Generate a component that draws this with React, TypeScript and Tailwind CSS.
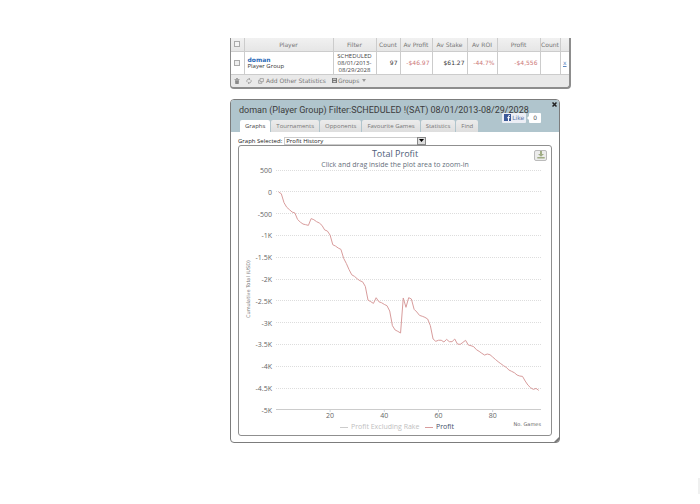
import { useState } from "react";

const columns = [
    { label: "Player", width: "w-[89px]" },
    { label: "Filter", width: "w-[43px]" },
    { label: "Count", width: "w-[24px]" },
    { label: "Av Profit", width: "w-[32px]" },
    { label: "Av Stake", width: "w-[35px]" },
    { label: "Av ROI", width: "w-[30px]" },
    { label: "Profit", width: "w-[43px]" },
    { label: "Count", width: "w-[20px]" },
];

const tabs = ["Graphs", "Tournaments", "Opponents", "Favourite Games", "Statistics", "Find"];

// running total in USD, one entry per game
const profit = [
    0, -40, -245, -350, -405, -460, -480, -630, -690, -735,
    -750, -765, -610, -635, -680, -710, -765, -870, -895, -987,
    -1210, -1240, -1285, -1316, -1520, -1640, -1780, -1900, -1935, -1990,
    -2035, -2060, -2165, -2480, -2515, -2555, -2425, -2517, -2540, -2578,
    -2608, -2730, -3066, -3165, -3196, -3234, -2431, -2645, -2424, -2454,
    -2690, -2752, -2830, -2850, -2875, -2913, -3066, -3372, -3425, -3400,
    -3400, -3440, -3380, -3433, -3433, -3372, -3487, -3495, -3450, -3402,
    -3510, -3525, -3548, -3617, -3655, -3700, -3740, -3716, -3732, -3785,
    -3840, -3892, -3938, -3984, -4022, -4083, -4114, -4145, -4198, -4221,
    -4229, -4336, -4428, -4490, -4527, -4505, -4551,
];

const yTicks = ["500", "0", "-500", "-1K", "-1.5K", "-2K", "-2.5K", "-3K", "-3.5K", "-4K", "-4.5K", "-5K"];

const gameX = (game: number) => 39.6 + (game - 1) * 2.71;
const valueY = (value: number) => 46 - (value / 500) * 21.8;

const TrashIcon = () => (
    <svg className="h-[6px] w-[6px]" viewBox="0 0 6 6" fill="#8a8a8a">
        <path d="M.5 1h1.500V.3h2V1h1.500v.8h-5zM1 2.200h4L4.700 6H1.300z" />
    </svg>
);

const RefreshIcon = () => (
    <svg className="h-[6px] w-[6px]" viewBox="0 0 6 6" fill="none" stroke="#999" strokeWidth=".8">
        <path d="M1.200 4.200A2 2 0 0 1 3 1h.8M2.900 0l1 1-1 1M4.800 1.800A2 2 0 0 1 3 5h-.8M3.100 4l-1 1 1 1" />
    </svg>
);

const CopyIcon = () => (
    <svg className="h-[6px] w-[6px]" viewBox="0 0 6 6" fill="none" stroke="#999" strokeWidth=".8">
        <path d="M2 .6h3.400v3H2zM3.800 3.600v1.700H.6V2.300H2" />
    </svg>
);

const SaveIcon = () => (
    <svg className="h-[5px] w-[5px]" viewBox="0 0 5 5">
        <path d="M0 0h5v5H0z" fill="#777" />
        <path d="M1 .7h3v1.100H1zM1.200 3h2.600v1.300H1.200z" fill="#ddd" />
    </svg>
);

const StatsTable = () => (
    <section className="w-full max-w-[341px] overflow-hidden rounded-b-[4px] border-r-2 border-b-2 border-l border-[#8d8d8d] bg-[#e9e9e9]">
        <table className="w-full table-fixed border-collapse text-[6px] leading-[7px] text-[#444]">
            <thead>
                <tr className="h-[13px] bg-gradient-to-b from-[#f1f1f1] to-[#e6e6e6]">
                    <th className="w-[13px] border-r border-b border-[#ccc] p-0">
                        <input type="checkbox" aria-label="Select all" className="mx-auto block h-[6px] w-[6px] appearance-none border border-[#aaa] bg-[#f4f4f4]" />
                    </th>
                    {columns.map((col, i) => (
                        <th key={i} className={`${col.width} border-r border-b border-[#ccc] p-0 font-normal whitespace-nowrap text-[#777]`}>
                            {col.label}
                        </th>
                    ))}
                    <th className="border-b border-[#ccc] p-0"></th>
                </tr>
            </thead>
            <tbody>
                <tr className="h-[23px] bg-white">
                    <td className="border-r border-b border-[#ccc] p-0">
                        <input type="checkbox" aria-label="Select doman" className="mx-auto block h-[6px] w-[6px] appearance-none border border-[#aaa] bg-[#eee]" />
                    </td>
                    <td className="border-r border-b border-[#ccc] py-0 pr-0 pl-[3px]">
                        <a href="#doman" className="block font-bold text-[#2a6ab8]">doman</a>
                        <span className="block font-['Open_Sans',sans-serif] text-[#333]">Player Group</span>
                    </td>
                    <td className="border-r border-b border-[#ccc] px-0 pt-px pb-0 text-center font-['Open_Sans',sans-serif]">
                        SCHEDULED<br />08/01/2013-<br />08/29/2028
                    </td>
                    <td className="border-r border-b border-[#ccc] py-0 pr-[2px] pl-0 text-right text-[#333]">97</td>
                    <td className="border-r border-b border-[#ccc] py-0 pr-[2px] pl-0 text-right text-[#cc7777]">-$46.97</td>
                    <td className="border-r border-b border-[#ccc] py-0 pr-[2px] pl-0 text-right text-[#333]">$61.27</td>
                    <td className="border-r border-b border-[#ccc] py-0 pr-[2px] pl-0 text-right text-[#cc7777]">-44.7%</td>
                    <td className="border-r border-b border-[#ccc] py-0 pr-[2px] pl-0 text-right text-[#cc7777]">-$4,556</td>
                    <td className="border-r border-b border-[#ccc] p-0"></td>
                    <td className="border-b border-[#ccc] p-0 text-center">
                        <a href="#remove" className="text-[#5b86bf] underline">x</a>
                    </td>
                </tr>
            </tbody>
        </table>
        <div className="flex h-[12px] items-center pl-[3px] text-[6px] leading-[8px] text-[#777]">
            <button aria-label="Delete" className="mr-[6px]"><TrashIcon /></button>
            <button aria-label="Refresh" className="mr-[6px]"><RefreshIcon /></button>
            <button className="mr-[6px] flex items-center gap-[2px]"><CopyIcon />Add Other Statistics</button>
            <button className="flex items-center gap-px">
                <SaveIcon />
                Groups
                <svg className="ml-[2px] h-[3px] w-[4px]" viewBox="0 0 4 3" fill="#999"><path d="M0 0h4L2 3z" /></svg>
            </button>
        </div>
    </section>
);

const ProfitChart = () => (
    <svg viewBox="0 0 312 289" className="block w-full font-['Open_Sans',sans-serif]" fontSize="7" fill="#666">
        <text x="156" y="11" textAnchor="middle" fontSize="9" fill="#4d5d78">Total Profit</text>
        <text x="156" y="21" textAnchor="middle" fill="#666f7c">Click and drag inside the plot area to zoom-in</text>

        {/* grid */}
        {yTicks.map((label, i) => (
            <g key={label}>
                <line
                    x1="37" x2="302" y1={Math.round(23.6 + i * 21.8) + 0.5} y2={Math.round(23.6 + i * 21.8) + 0.5}
                    stroke={i === yTicks.length - 1 ? "#ccc" : "#ddd"}
                    strokeDasharray={i === yTicks.length - 1 ? undefined : "1 1"}
                />
                <text x="33" y={27 + i * 21.8} textAnchor="end">{label}</text>
            </g>
        ))}
        {[20, 40, 60, 80].map((game) => (
            <g key={game}>
                <line x1={gameX(game)} x2={gameX(game)} y1="264" y2="266" stroke="#ccd3dd" />
                <text x={gameX(game)} y="272" textAnchor="middle">{game}</text>
            </g>
        ))}

        <text transform="translate(11 143) rotate(-90)" textAnchor="middle" fontSize="5" fill="#777" className="font-['DejaVu_Sans',sans-serif]">Cumulative Total (USD)</text>
        <text x="302" y="280" textAnchor="end" fontSize="5" className="font-['DejaVu_Sans',sans-serif]">No. Games</text>

        <polyline
            points={profit.map((value, i) => `${gameX(i + 1)},${valueY(value)}`).join(" ")}
            fill="none" stroke="#d89c9c" strokeWidth="1" strokeLinejoin="round"
        />

        {/* legend */}
        <line x1="101" x2="109" y1="281.5" y2="281.5" stroke="#ccc" />
        <text x="112" y="283" fill="#c0c0c0">Profit Excluding Rake</text>
        <line x1="186" x2="194" y1="281.5" y2="281.5" stroke="#d89c9c" />
        <text x="197" y="283" fill="#3f4f6a">Profit</text>
    </svg>
);

const GraphWindow = () => {
    const [activeTab, setActiveTab] = useState("Graphs");

    return (
        <section className="relative w-full max-w-[330px] overflow-hidden rounded-[4px] border border-[#7c7c7c] bg-white">
            <header className="bg-[#b0c5cd] pt-[5px] pl-[8px]">
                <h1 className="font-[Roboto,sans-serif] text-[9px] leading-[10px] whitespace-nowrap text-[#3c3c3c]">
                    doman (Player Group) Filter:SCHEDULED !(SAT) 08/01/2013-08/29/2028
                </h1>
                <nav className="mt-[5px] ml-px flex gap-px font-['Open_Sans',sans-serif]">
                    {tabs.map((tab) => (
                        <button
                            key={tab}
                            onClick={() => setActiveTab(tab)}
                            className={
                                tab === activeTab
                                    ? "h-[12px] rounded-t-[2px] bg-white px-[5px] text-[6px] leading-[12px] whitespace-nowrap text-[#444]"
                                    : "h-[12px] rounded-t-[2px] bg-gradient-to-b from-[#ececec] to-[#dedede] px-[5px] text-[6px] leading-[12px] whitespace-nowrap text-[#777]"
                            }
                        >
                            {tab}
                        </button>
                    ))}
                </nav>
            </header>

            {/* window controls */}
            <button aria-label="Close" className="absolute top-[2px] right-[2px]">
                <svg className="h-[5px] w-[5px]" viewBox="0 0 5 5" stroke="#222" strokeWidth="1.500"><path d="M.5.5l4 4M4.500.5l-4 4" /></svg>
            </button>
            <div className="absolute top-[13px] right-[18px] flex items-center gap-[3px] text-[6px] leading-[10px]">
                <button className="flex h-[10px] items-center gap-px rounded-[1px] bg-[#eceef5] px-[2px] text-[#5b74a8]">
                    <svg className="h-[7px] w-[7px]" viewBox="0 0 7 7">
                        <path d="M0 0h7v7H0z" fill="#3b5998" />
                        <path d="M6 1.500H5.200Q4.500 1.500 4.500 2.300V7M3.200 3.700H6" stroke="#fff" fill="none" />
                    </svg>
                    Like
                </button>
                <span className="relative h-[10px] rounded-[1px] bg-white px-[4px] text-[#555]">
                    <svg className="absolute top-[3px] -left-[2px] h-[4px] w-[2px]" viewBox="0 0 2 4" fill="#fff"><path d="M2 0v4L0 2z" /></svg>
                    0
                </span>
            </div>

            <div className="px-[7px] pt-[5px] pb-[6px]">
                <div className="flex h-[8px] items-center text-[6px] leading-[8px] text-[#222]">
                    <label htmlFor="graph" className="mr-[2px] font-['Open_Sans',sans-serif] whitespace-nowrap">Graph Selected:</label>
                    <div className="relative w-[142px]">
                        <select id="graph" className="block h-[8px] w-full appearance-none border border-[#ccc] bg-white pl-px font-['Open_Sans',sans-serif] text-[6px] leading-[6px]">
                            <option>Profit History</option>
                        </select>
                        <span className="pointer-events-none absolute top-0 right-0 flex h-[8px] w-[9px] items-center justify-center border border-[#888] bg-[#ddd]">
                            <svg className="h-[3px] w-[5px]" viewBox="0 0 5 3"><path d="M0 0h5L2.500 3z" /></svg>
                        </span>
                    </div>
                </div>
                <div className="relative rounded-[3px] border border-[#8f8f8f]">
                    <ProfitChart />
                    <button aria-label="Export chart" className="absolute top-[4px] right-[4px] flex h-[11px] w-[13px] items-center justify-center rounded-[2px] border border-[#bbb] bg-[#ececec]">
                        <svg className="h-[8px] w-[8px]" viewBox="0 0 8 8" fill="#a0ac85"><path d="M3 0h2v3h2L4 5.800 1 3h2zM.3 6h7.400v1.500H.3z" /></svg>
                    </button>
                </div>
            </div>
            <svg className="absolute right-0 bottom-0 h-[5px] w-[5px]" viewBox="0 0 5 5" fill="#777"><path d="M5 0v5H0z" /></svg>
        </section>
    );
};

const App = () => {
    return (
        <main className="min-h-screen bg-white pt-[38px] pl-[230px] font-['DejaVu_Sans',sans-serif]">
            <div className="flex flex-col gap-[10px]">
                <StatsTable />
                <GraphWindow />
            </div>
            <div className="fixed right-0 bottom-[10px] h-[16px] w-[2px] bg-[#f0f0f0]"></div>
        </main>
    );
};

export default App;
